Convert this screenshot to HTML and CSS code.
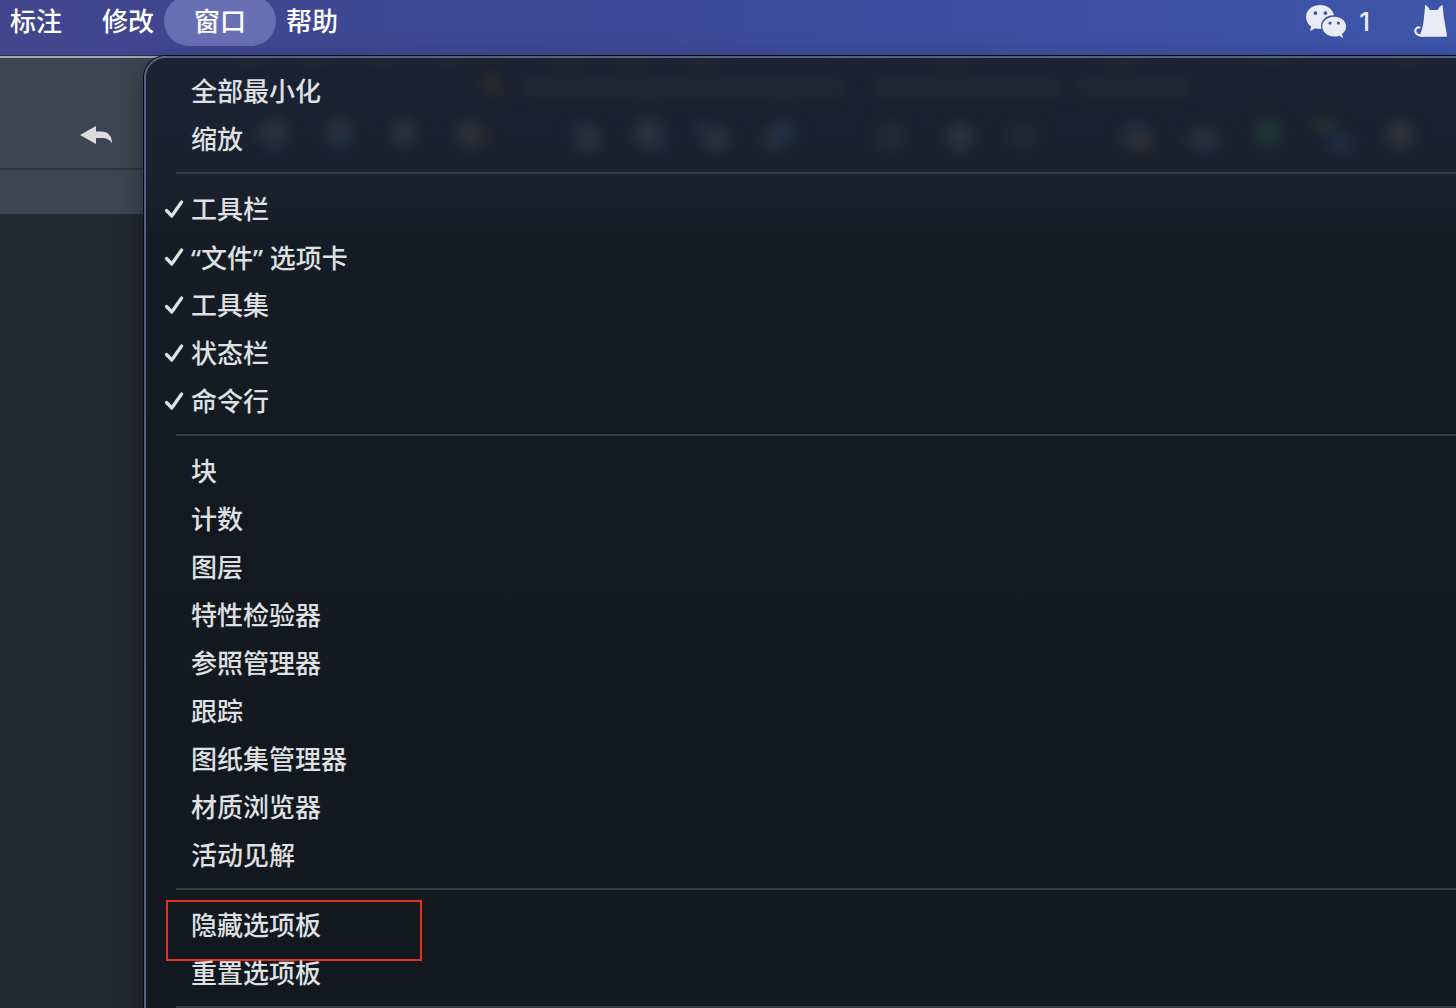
FILE: index.html
```html
<!DOCTYPE html>
<html lang="zh-CN">
<head>
<meta charset="utf-8">
<meta name="viewport" content="width=device-width, initial-scale=1">
<title>窗口</title>
<link rel="stylesheet" href="styles.css">
</head>
<body>
<svg class="defs" aria-hidden="true">
  <symbol id="check" viewBox="0 0 20 20"><path d="M2.500 11.500 7.800 17 17.600 3" fill="none" stroke="currentColor" stroke-width="3.300" stroke-linecap="round" stroke-linejoin="round"/></symbol>
</svg>
<header class="menubar">
  <nav class="menus">
    <button class="menu-title">标注</button>
    <button class="menu-title">修改</button>
    <button class="menu-title open" aria-expanded="true">窗口</button>
    <button class="menu-title">帮助</button>
  </nav>
  <div class="status">
    <button class="status-item" aria-label="微信">
      <svg class="wechat" viewBox="0 0 42 34" aria-hidden="true">
        <path fill="currentColor" fill-rule="evenodd" d="M15 1C7.100 1 1 6.200 1 13c0 4 2 7.300 5.200 9.600L5 27l5.300-2.800c2 .6 4 .8 6 .7C14.700 17 20.500 11 29 11.300 28 5.400 22.200 1 15 1ZM10.400 7.200a1.900 1.900 0 1 1 0 3.800 1.900 1.900 0 0 1 0-3.800Zm10 0a1.900 1.900 0 1 1 0 3.800 1.900 1.900 0 0 1 0-3.800Z"/>
        <path fill="currentColor" fill-rule="evenodd" d="M29.200 12.700c-6.700 0-11.900 4.300-11.900 9.900s5.200 10 11.900 10c1.800 0 3.400-.3 4.900-.9l4 2.300-1.100-3.900c2.500-1.900 4.100-4.500 4.100-7.500 0-5.600-5.200-9.900-11.900-9.900ZM25 17.400a1.600 1.600 0 1 1 0 3.200 1.600 1.600 0 0 1 0-3.200Zm8.400 0a1.600 1.600 0 1 1 0 3.200 1.600 1.600 0 0 1 0-3.200Z"/>
      </svg>
      <span>1</span>
    </button>
    <button class="status-item" aria-label="猫">
      <svg class="cat" viewBox="0 0 34 34" aria-hidden="true">
        <path fill="currentColor" d="M11.200 .8c2 1.200 3.600 3 4.800 5.200h7.600c1.200-2.200 2.800-4 4.900-5.200.4 4 .8 8.200 1.300 12.200L33 31.500c0 .8-.4 1.300-1.200 1.300H8c-2 0-2.400-1-1.900-2.300C8.500 25 9.600 19 10 13Z"/>
        <path fill="none" stroke="currentColor" stroke-width="2.200" stroke-linecap="round" d="M5.500 23.500c-3-.4-4.600 2-4.100 4.300.6 2.800 3.600 3.900 7.600 3.900"/>
      </svg>
    </button>
  </div>
</header>
<main class="workspace">
  <div class="toolbar">
    <button class="undo" aria-label="放弃">
      <svg viewBox="0 0 32 18" aria-hidden="true"><path fill="currentColor" d="M0 9 16 0v5.500h5C28 5.500 32 10 32 17c-3-4-6-5-10-5h-6v6Z"/></svg>
    </button>
  </div>
  <div class="tabs"></div>
</main>
<div class="dropdown" role="menu" aria-label="窗口">
  <svg class="glow" aria-hidden="true">
    <g class="soft">
      <g fill="#3a3b40">
        <ellipse cx="103" cy="0" rx="17" ry="3"/><ellipse cx="168" cy="0" rx="16" ry="3"/><ellipse cx="236" cy="0" rx="16" ry="3"/><ellipse cx="302" cy="0" rx="16" ry="3"/>
        <ellipse cx="423" cy="0" rx="16" ry="3"/><ellipse cx="487" cy="0" rx="16" ry="3"/><ellipse cx="556" cy="0" rx="16" ry="3"/><ellipse cx="807" cy="0" rx="16" ry="3"/>
        <ellipse cx="976" cy="0" rx="16" ry="3"/><ellipse cx="1262" cy="0" rx="16" ry="3"/>
      </g>
      <ellipse cx="1124" cy="0" rx="20" ry="3" fill="#1f4130"/>
      <path d="M333 15h20l7 22h-20z" fill="#302c27"/>
      <path d="M376 17h320v22H376zM728 17h186v22H728zM932 17h112v22H932z" fill="#242936"/>
      <g fill="#343741">
        <ellipse cx="128" cy="74" rx="13" ry="13"/><ellipse cx="193" cy="72" rx="12" ry="12"/><ellipse cx="257" cy="75" rx="11" ry="14"/><ellipse cx="324" cy="76" rx="12" ry="14"/>
        <ellipse cx="442" cy="80" rx="11" ry="14"/><ellipse cx="502" cy="75" rx="12" ry="16"/><ellipse cx="570" cy="81" rx="13" ry="12"/><ellipse cx="628" cy="80" rx="9" ry="12"/>
        <ellipse cx="814" cy="79" rx="12" ry="15"/><ellipse cx="992" cy="80" rx="14" ry="12"/><ellipse cx="1058" cy="81" rx="14" ry="11"/><ellipse cx="1254" cy="77" rx="13" ry="15"/>
      </g>
      <g fill="#252a36"><ellipse cx="744" cy="78" rx="17" ry="16"/><ellipse cx="877" cy="78" rx="16" ry="14"/></g>
      <g fill="#1d3246">
        <ellipse cx="128" cy="87" rx="12" ry="6"/><ellipse cx="194" cy="85" rx="13" ry="7"/><ellipse cx="432" cy="76" rx="6" ry="13"/><ellipse cx="514" cy="80" rx="6" ry="13"/>
        <ellipse cx="557" cy="70" rx="9" ry="7"/><ellipse cx="639" cy="73" rx="11" ry="15"/><ellipse cx="988" cy="69" rx="11" ry="7"/><ellipse cx="1066" cy="87" rx="9" ry="7"/><ellipse cx="1196" cy="86" rx="13" ry="11"/>
      </g>
      <g fill="#382e2e"><ellipse cx="333" cy="80" rx="7" ry="8"/><ellipse cx="1001" cy="86" rx="7" ry="6"/></g>
      <g fill="#203a32"><ellipse cx="1122" cy="75" rx="14" ry="15"/><ellipse cx="1180" cy="68" rx="12" ry="8"/></g>
    </g>
  </svg>
  <button role="menuitem">全部最小化</button>
  <button role="menuitem">缩放</button>
  <hr>
  <button role="menuitemcheckbox" aria-checked="true"><svg><use href="#check"/></svg>工具栏</button>
  <button role="menuitemcheckbox" aria-checked="true"><svg><use href="#check"/></svg><span class="quoted">“文件” 选项卡</span></button>
  <button role="menuitemcheckbox" aria-checked="true"><svg><use href="#check"/></svg>工具集</button>
  <button role="menuitemcheckbox" aria-checked="true"><svg><use href="#check"/></svg>状态栏</button>
  <button role="menuitemcheckbox" aria-checked="true"><svg><use href="#check"/></svg>命令行</button>
  <hr>
  <button role="menuitem">块</button>
  <button role="menuitem">计数</button>
  <button role="menuitem">图层</button>
  <button role="menuitem">特性检验器</button>
  <button role="menuitem">参照管理器</button>
  <button role="menuitem">跟踪</button>
  <button role="menuitem">图纸集管理器</button>
  <button role="menuitem">材质浏览器</button>
  <button role="menuitem">活动见解</button>
  <hr>
  <button role="menuitem" class="marked">隐藏选项板</button>
  <button role="menuitem">重置选项板</button>
  <hr>
</div>
</body>
</html>
```
FILE: styles.css
```css
*, *::after { box-sizing: border-box; }

body {
  margin: 0;
  height: 100vh;
  overflow: hidden;
  position: relative;
  display: flex;
  flex-direction: column;
  background: #22282e;
  font-family: Inter, "Noto Sans CJK SC", sans-serif;
  font-size: 26px;
  font-weight: 500;
}

button {
  margin: 0;
  padding: 0;
  border: 0;
  background: none;
  color: inherit;
  font: inherit;
  text-align: left;
  white-space: nowrap;
}

.defs { position: absolute; width: 0; height: 0; }

.menubar {
  flex: none;
  height: 56px;
  overflow: hidden;
  display: flex;
  justify-content: space-between;
  align-items: flex-start;
  padding: 0 8px 0 10px;
  background: linear-gradient(90deg, #41468e, #3e4a98 45%, #3d55aa);
  border-bottom: 1px solid #2b2c50;
  color: #fff;
}

.menus { display: flex; gap: 40px; }

.menu-title {
  height: 50px;
  margin-top: -4px;
  line-height: 52px;
}

.menu-title.open {
  margin-left: -30px;
  margin-right: -30px;
  padding: 0 30px;
  border-radius: 25px;
  background: #686fb5;
}

.status { display: flex; gap: 44px; color: #e9ecf7; }

.status-item {
  height: 42px;
  display: flex;
  align-items: center;
  gap: 12px;
}

.wechat { width: 42px; height: 34px; }
.cat { width: 34px; height: 34px; }

.workspace { flex: 1; }

.toolbar {
  height: 114px;
  padding: 68px 80px 0;
  border-top: 2px solid #a3a5ab;
  border-bottom: 2px solid #2d333d;
  background: #3d4552;
}

.undo { display: block; width: 32px; height: 18px; color: #dcdcdc; }
.undo svg { display: block; width: 32px; height: 18px; }

.tabs { height: 44px; background: #3d4553; }

/* Opened menu, over the application window */
.dropdown {
  position: absolute;
  top: 56px;
  left: 144px;
  right: -40px;
  display: flex;
  flex-direction: column;
  padding: 9px 30px 24px;
  border: 2px solid #52617f;
  border-radius: 22px;
  background: linear-gradient(#1b2233, #1b212f 110px, #161c26 180px, #141b23 340px, #14181f 500px, #13171e);
  box-shadow: 0 0 0 1px #080a14, 0 8px 28px rgba(0, 0, 0, 0.35);
  color: #dfe0e2;
}

.dropdown button {
  position: relative;
  height: 48px;
  padding-left: 15px;
  line-height: 50px;
}

.dropdown button svg {
  position: absolute;
  left: -12px;
  top: 14px;
  width: 20px;
  height: 20px;
}

.dropdown hr {
  width: 100%;
  height: 2px;
  margin: 9px 0 11px;
  border: 0;
  background: #363b45;
}

.quoted { font-family: "Noto Sans", "Noto Sans CJK SC", sans-serif; }

.glow {
  position: absolute;
  inset: 0;
  width: 100%;
  height: 120px;
}

.soft { filter: blur(7px); opacity: 0.8; }

.marked::after {
  content: "";
  position: absolute;
  left: -10px;
  top: -1px;
  width: 256px;
  height: 61px;
  border: 2px solid #e33224;
}
```
